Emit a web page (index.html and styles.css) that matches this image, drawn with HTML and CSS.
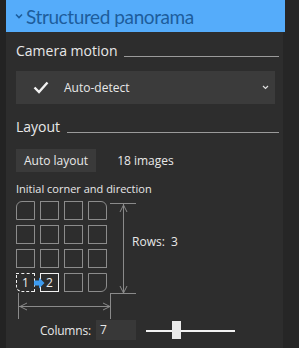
FILE: index.html
```html
<html>
<head>
<link rel="stylesheet" href="styles.css">
<title>Structured panorama</title>
</head>
<body>
<div class="shell">
  <div class="panel">
    <div class="header">
      <svg class="chev" width="8" height="6" viewBox="0 0 8 6"><path d="M1 1.5 L4 4.5 L7 1.5" stroke="#1d5d9c" stroke-width="1.6" fill="none"/></svg>
      <span class="title">Structured panorama</span>
    </div>

    <div class="section first">
      <div class="heading"><span>Camera motion</span><div class="rule"></div></div>
      <div class="dropdown">
        <svg class="check" width="16" height="13" viewBox="0 0 16 13"><path d="M1.5 6.5 L6 11 L14.5 1.5" stroke="#f2f2f2" stroke-width="2.4" fill="none"/></svg>
        <span class="ddtext">Auto-detect</span>
        <svg class="ddarrow" width="7" height="5" viewBox="0 0 7 5"><path d="M1 1 L3.5 3.5 L6 1" stroke="#ddd" stroke-width="1.2" fill="none"/></svg>
      </div>
    </div>

    <div class="section">
      <div class="heading"><span>Layout</span><div class="rule"></div></div>
      <div class="autorow">
        <div class="btn">Auto layout</div>
        <span>18 images</span>
      </div>
      <div class="small">Initial corner and direction</div>

      <div class="diagram">
        <div class="cells">
          <div class="cell tl"></div><div class="cell"></div><div class="cell"></div><div class="cell tr"></div>
          <div class="cell"></div><div class="cell"></div><div class="cell"></div><div class="cell"></div>
          <div class="cell"></div><div class="cell"></div><div class="cell"></div><div class="cell"></div>
          <div class="cell bl sel">1</div><div class="cell on">2</div><div class="cell"></div><div class="cell br"></div>
          <svg class="dir" width="12" height="12" viewBox="0 0 12 12"><path d="M1 3.5 H6 V0.5 L11.5 6 L6 11.5 V8.5 H1 Z" fill="#3d9bf0"/></svg>
        </div>
        <svg class="vdim" width="28" height="95" viewBox="0 0 28 95">
          <path d="M0 2.5 H26 M0 92.5 H26 M13.5 3 V92" stroke="#8a8a8a" stroke-width="1" fill="none"/>
          <path d="M10 11 L13.5 4 L17 11 M10 85 L13.5 92 L17 85" stroke="#8a8a8a" stroke-width="1" fill="none"/>
        </svg>
        <div class="rows">Rows:&nbsp; 3</div>
      </div>
      <svg class="hdim" width="96" height="26" viewBox="0 0 96 26">
        <path d="M1.5 0 V26 M93.5 0 V26 M2 13.5 H93" stroke="#8a8a8a" stroke-width="1" fill="none"/>
        <path d="M10 10 L3 13.5 L10 17 M86 10 L93 13.5 L86 17" stroke="#8a8a8a" stroke-width="1" fill="none"/>
      </svg>

      <div class="colrow">
        <span class="collabel">Columns:</span>
        <div class="numbox">7</div>
        <div class="slider">
          <div class="track"></div>
          <div class="thumb"></div>
        </div>
      </div>
    </div>
  </div>
  <div class="side"></div>
</div>
</body>
</html>
```
FILE: styles.css
```css
body {margin: 0;
      background-color: #232323;
      font-family: "Open Sans", "Noto Sans", sans-serif;
      color: #e8e8e8}
.shell {display: flex;
        height: 348px;
        width: 299px;
        padding-left: 6px;
        box-sizing: border-box}
.panel {width: 277px;
        background-color: #2d2d2d;
        position: relative}
.side {flex: 1;
       background-color: #262626}
.header {background-color: #55acfa;
         height: 32px;
         width: 279px;
         display: flex;
         align-items: center;
         color: #1d5d9c;
         position: relative;
         z-index: 1}
.title {font-family: Lato, "Open Sans", sans-serif;
        font-size: 19px;
        letter-spacing: -0.4px}
.chev {margin-left: 9px;
       margin-right: 3px}
.section {padding: 0 0 0 10px;
          margin-top: 8px}
.first {margin-top: 4px}
.heading {display: flex;
          align-items: flex-end;
          font-size: 14px;
          height: 26px;
          line-height: 22px}
.rule {flex: 1;
       height: 1px;
       background-color: #9a9a9a;
       margin: 0 4px 5px 7px}
.dropdown {margin-top: 9px;
           width: 259px;
           height: 33px;
           background-color: #3b3b3b;
           display: flex;
           align-items: center;
           font-size: 12px}
.check {margin-left: 17px}
.ddtext {margin-left: 15px;
         flex: 1}
.ddarrow {margin-right: 6px}
.autorow {display: flex;
          align-items: center;
          margin-top: 11px;
          font-size: 12px}
.btn {background-color: #3a3a3a;
      height: 23px;
      line-height: 23px;
      padding: 0 8px;
      margin-right: 21px}
.small {font-size: 11px;
        margin-top: 9px;
        height: 15px}
.diagram {display: flex;
          align-items: flex-start;
          margin-top: 5px}
.cells {display: grid;
        grid-template-columns: repeat(4, 19px);
        grid-auto-rows: 19px;
        gap: 5px;
        position: relative}
.cell {border: 1px solid #8c8c8c;
       box-sizing: border-box;
       font-size: 12px;
       line-height: 17px;
       text-align: center;
       color: #f0f0f0}
.tl {border-top-left-radius: 6px}
.tr {border-top-right-radius: 6px}
.bl {border-bottom-left-radius: 6px}
.br {border-bottom-right-radius: 6px}
.sel {border: 1px dashed #f0f0f0}
.on {border-color: #f0f0f0}
.dir {position: absolute;
      left: 17px;
      top: 76px}
.vdim {margin-left: 3px;
       margin-top: 0}
.rows {font-size: 12px;
       margin-top: 32px;
       margin-left: -6px}
.hdim {display: block;
       margin-left: 1px;
       margin-top: -3px}
.colrow {display: flex;
         align-items: center;
         margin-top: 1px;
         font-size: 12px}
.collabel {margin-left: 24px;
           margin-right: 5px;
           letter-spacing: -0.2px}
.numbox {width: 36px;
         height: 20px;
         line-height: 20px;
         padding-left: 4px;
         background-color: #383838}
.slider {position: relative;
         width: 89px;
         height: 20px;
         margin-left: 10px}
.track {position: absolute;
        left: 0;
        right: 0;
        top: 10px;
        height: 2px;
        background-color: #f2f2f2}
.thumb {position: absolute;
        left: 26px;
        top: 1px;
        width: 9px;
        height: 18px;
        background-color: #eaeaea}
```
